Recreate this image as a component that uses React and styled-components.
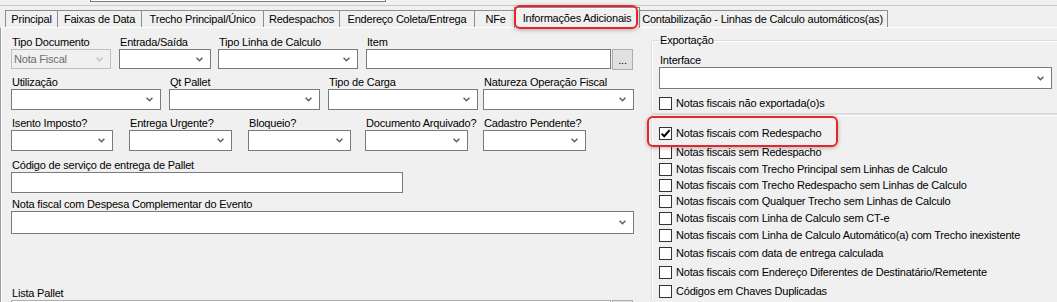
import React from 'react';
import styled, { createGlobalStyle } from 'styled-components';

const Global = createGlobalStyle`
  html, body { margin: 0; padding: 0; background: #f0f0f0; }
  body { font-family: "Liberation Sans", Arial, sans-serif; font-size: 11px; letter-spacing: -0.2px; color: #000; }
  * { box-sizing: border-box; }
`;

const Screen = styled.div`
  position: relative;
  width: 1057px;
  height: 302px;
  overflow: hidden;
  background: #f0f0f0;
  display: flex;
  flex-direction: column;
`;

const TopStrip = styled.div`
  height: 6px;
  flex: none;
  border-bottom: 1px solid #c9c9c9;
`;

const CutField = styled.div`
  margin-left: 90px;
  width: 296px;
  height: 2px;
  border: 1px solid #7a7a7a;
  border-top: none;
  background: #fff;
`;

const TabRow = styled.div`
  height: 21px;
  flex: none;
  display: flex;
  align-items: flex-end;
  padding-left: 5px;
`;

const Tab = styled.div`
  position: relative;
  width: ${p => p.$w}px;
  height: ${p => (p.$active ? 21 : 17)}px;
  margin-left: ${p => (p.$first ? 0 : p.$active ? -3 : -1)}px;
  margin-right: ${p => (p.$active ? -2 : 0)}px;
  margin-bottom: ${p => (p.$active ? -1 : 0)}px;
  z-index: ${p => (p.$active ? 2 : 1)};
  border: 1px solid #8e8e8e;
  border-bottom: none;
  background: #f0f0f0;
  box-shadow: ${p => (p.$active ? 'inset 1px 1px 0 #fff' : 'none')};
  padding-top: ${p => (p.$active ? 4 : 2)}px;
  text-align: center;
  line-height: 13px;
  white-space: nowrap;
`;

const Panel = styled.div`
  flex: 1;
  display: flex;
  border-top: 1px solid #fff;
  border-left: 1px solid #a0a0a0;
  box-shadow: inset 1px 0 0 #fff;
  min-height: 0;
`;

const FormArea = styled.div`
  width: 650px;
  flex: none;
  padding: 8px 0 0 10px;
  display: flex;
  flex-direction: column;
`;

const Row = styled.div`
  display: flex;
  align-items: flex-start;
  margin-top: ${p => p.$mt || 0}px;
`;

const Field = styled.div`
  display: flex;
  flex-direction: column;
  width: ${p => p.$w}px;
  margin-left: ${p => p.$ml || 0}px;
  flex: none;
`;

const Label = styled.div`
  height: 13px;
  line-height: 13px;
  white-space: nowrap;
  padding-left: 1px;
`;

const SelectBox = styled.div`
  height: ${p => p.$h || 20}px;
  width: 100%;
  border: 1px solid ${p => (p.$disabled ? '#bfbfbf' : '#7a7a7a')};
  background: ${p => (p.$disabled ? '#f0f0f0' : '#fff')};
  display: flex;
  align-items: center;
  padding: 0 7px 0 2px;
  color: ${p => (p.$disabled ? '#6d6d6d' : '#000')};
`;

const SelectText = styled.span`
  flex: 1;
  white-space: nowrap;
  overflow: hidden;
`;

const TextBox = styled.div`
  height: ${p => p.$h || 20}px;
  width: ${p => (p.$w ? `${p.$w}px` : '100%')};
  flex: none;
  border: 1px solid ${p => (p.$light ? '#adadad' : '#7a7a7a')};
  background: #fff;
`;

const InputGroup = styled.div`
  display: flex;
  align-items: flex-start;
`;

const DotsButton = styled.div`
  width: 21px;
  height: 21px;
  margin-left: 1px;
  flex: none;
  border: 1px solid #adadad;
  background: #e1e1e1;
  display: flex;
  align-items: flex-end;
  justify-content: center;
  padding-bottom: 3px;
  line-height: 11px;
  font-size: 11px;
`;

const RightCol = styled.div`
  flex: none;
  width: 420px;
  padding-top: 6px;
  display: flex;
  flex-direction: column;
`;

const Group = styled.fieldset`
  margin: 0;
  width: 420px;
  border: 1px solid #dcdcdc;
  border-radius: 3px;
  box-shadow: inset 1px 1px 0 #fff;
  padding: ${p => p.$pt || 0}px 0 ${p => p.$pb || 0}px 7px;
  min-width: 0;
  ${p => (p.$grow ? 'flex: 1; border-bottom: none;' : '')}
`;

const Legend = styled.legend`
  padding: 0 1px;
  margin-left: 0;
  line-height: 13px;
  height: 13px;
`;

const Inline = styled.div`
  width: ${p => p.$w}px;
  margin-top: ${p => p.$mt || 0}px;
`;

const CheckRow = styled.div`
  display: flex;
  align-items: flex-start;
  height: ${p => p.$h}px;
  margin-top: ${p => p.$mt || 0}px;
  flex: none;
`;

const Box = styled.div`
  width: 13px;
  height: 13px;
  flex: none;
  border: 1px solid #333;
  background: #fff;
  display: flex;
  align-items: center;
  justify-content: center;
`;

const CheckText = styled.span`
  margin-left: 4px;
  line-height: 13px;
  white-space: nowrap;
`;

const Callout = styled.div`
  position: absolute;
  left: ${p => p.$x}px;
  top: ${p => p.$y}px;
  width: ${p => p.$w}px;
  height: ${p => p.$h}px;
  border: 2px solid #e8242c;
  border-radius: 6px;
  box-shadow: 0 1px 4px rgba(0, 0, 0, 0.28);
  pointer-events: none;
  z-index: 5;
`;

const Chevron = ({ disabled }) => (
  <svg width="7" height="5" viewBox="0 0 7 5" style={{ flex: 'none' }}>
    <path d="M0.6 0.8 L3.5 3.7 L6.4 0.8" fill="none" stroke={disabled ? '#c2c2c2' : '#606060'} strokeWidth="1.6" />
  </svg>
);

const Select = ({ h, disabled, value }) => (
  <SelectBox $h={h} $disabled={disabled}>
    <SelectText>{value}</SelectText>
    <Chevron disabled={disabled} />
  </SelectBox>
);

const Check = ({ checked, label, h, mt }) => (
  <CheckRow $h={h} $mt={mt}>
    <Box>
      {checked && (
        <svg width="11" height="11" viewBox="0 0 11 11">
          <path d="M1.6 5.6 L4.2 8.2 L9.6 2.2" fill="none" stroke="#000" strokeWidth="2" />
        </svg>
      )}
    </Box>
    <CheckText>{label}</CheckText>
  </CheckRow>
);

const tabs = [
  ['Principal', 53],
  ['Faixas de Data', 85],
  ['Trecho Principal/Único', 123],
  ['Redespachos', 77],
  ['Endereço Coleta/Entrega', 136],
  ['NFe', 43],
  ['Informações Adicionais', 126, true],
  ['Contabilização - Linhas de Calculo automáticos(as)', 251],
];

const checks = [
  ['Notas fiscais com Redespacho', 19, true],
  ['Notas fiscais sem Redespacho', 17],
  ['Notas fiscais com Trecho Principal sem Linhas de Calculo', 16],
  ['Notas fiscais com Trecho Redespacho sem Linhas de Calculo', 16],
  ['Notas fiscais com Qualquer Trecho sem Linhas de Calculo', 17],
  ['Notas fiscais com Linha de Calculo sem CT-e', 17],
  ['Notas fiscais com Linha de Calculo Automático(a) com Trecho inexistente', 18],
  ['Notas fiscais com data de entrega calculada', 19],
  ['Notas fiscais com Endereço Diferentes de Destinatário/Remetente', 19],
  ['Códigos em Chaves Duplicadas', 16],
];

export default function App() {
  return (
    <>
      <Global />
      <Screen>
        <TopStrip>
          <CutField />
        </TopStrip>
        <TabRow>
          {tabs.map(([t, w, a], i) => (
            <Tab key={t} $w={w} $active={a} $first={i === 0}>{t}</Tab>
          ))}
        </TabRow>
        <Panel>
          <FormArea>
            <Row>
              <Field $w={100}>
                <Label>Tipo Documento</Label>
                <Select disabled value="Nota Fiscal" />
              </Field>
              <Field $w={92} $ml={8}>
                <Label>Entrada/Saída</Label>
                <Select />
              </Field>
              <Field $w={140} $ml={7}>
                <Label>Tipo Linha de Calculo</Label>
                <Select />
              </Field>
              <Field $w={267} $ml={8}>
                <Label>Item</Label>
                <InputGroup>
                  <TextBox $w={245} $h={20} />
                  <DotsButton>...</DotsButton>
                </InputGroup>
              </Field>
            </Row>
            <Row $mt={6}>
              <Field $w={150}>
                <Label>Utilização</Label>
                <Select h={21} />
              </Field>
              <Field $w={151} $ml={8}>
                <Label>Qt Pallet</Label>
                <Select h={21} />
              </Field>
              <Field $w={150} $ml={8}>
                <Label>Tipo de Carga</Label>
                <Select h={21} />
              </Field>
              <Field $w={151} $ml={5}>
                <Label>Natureza Operação Fiscal</Label>
                <Select h={21} />
              </Field>
            </Row>
            <Row $mt={7}>
              <Field $w={102}>
                <Label>Isento Imposto?</Label>
                <Select h={21} />
              </Field>
              <Field $w={103} $ml={16}>
                <Label>Entrega Urgente?</Label>
                <Select h={21} />
              </Field>
              <Field $w={103} $ml={16}>
                <Label>Bloqueio?</Label>
                <Select h={21} />
              </Field>
              <Field $w={103} $ml={14}>
                <Label>Documento Arquivado?</Label>
                <Select h={21} />
              </Field>
              <Field $w={103} $ml={15}>
                <Label>Cadastro Pendente?</Label>
                <Select h={21} />
              </Field>
            </Row>
            <Row $mt={8}>
              <Field $w={392}>
                <Label>Código de serviço de entrega de Pallet</Label>
                <TextBox $h={21} />
              </Field>
            </Row>
            <Row $mt={5}>
              <Field $w={623}>
                <Label>Nota fiscal com Despesa Complementar do Evento</Label>
                <Select h={23} />
              </Field>
            </Row>
            <Row $mt={53}>
              <Field $w={622}>
                <Label>Lista Pallet</Label>
                <InputGroup>
                  <TextBox $w={600} $h={40} $light />
                  <DotsButton />
                </InputGroup>
              </Field>
            </Row>
          </FormArea>
          <RightCol>
            <Group $pt={7} $pb={3}>
              <Legend>Exportação</Legend>
              <Label>Interface</Label>
              <Inline $w={393}>
                <Select h={22} />
              </Inline>
              <Check label="Notas fiscais não exportada(o)s" h={13} mt={8} />
            </Group>
            <Group $pt={12} $grow>
              {checks.map(([l, h, c]) => (
                <Check key={l} label={l} h={h} checked={c} />
              ))}
            </Group>
          </RightCol>
        </Panel>
        <Callout $x={514} $y={5} $w={124} $h={24} />
        <Callout $x={647} $y={116} $w={191} $h={31} />
      </Screen>
    </>
  );
}
